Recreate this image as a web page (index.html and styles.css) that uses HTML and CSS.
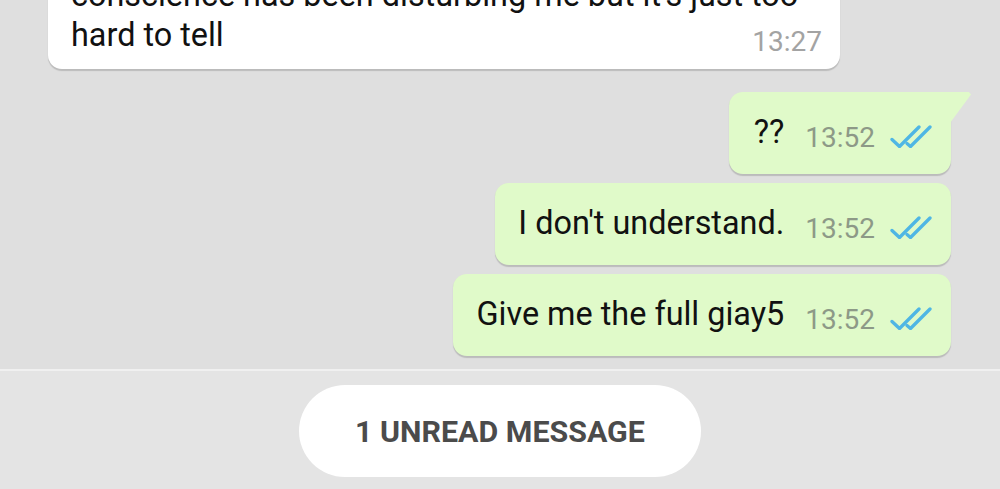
FILE: index.html
```html
<!DOCTYPE html>
<html>
<head>
<meta charset="utf-8">
<link rel="stylesheet" href="styles.css">
</head>
<body>
<div class="screen">
  <div class="chat">
    <div class="bubble in">
      <span class="text">conscience has been disturbing me but it's just too hard to tell</span><span class="meta in-meta"><span class="time">13:27</span></span>
    </div>
    <div class="row out-row">
      <div class="bubble out first">
        <span class="text">??</span>
        <span class="meta"><span class="time">13:52</span><svg class="ticks" viewBox="0 0 44 24" width="44" height="24"><path d="M4 15.5 L11.5 22.5 L31 3" /><path d="M19 19.5 L22.5 22.5 L42 3" /></svg></span>
        <span class="tail"></span>
      </div>
    </div>
    <div class="row out-row">
      <div class="bubble out">
        <span class="text">I don't understand.</span>
        <span class="meta"><span class="time">13:52</span><svg class="ticks" viewBox="0 0 44 24" width="44" height="24"><path d="M4 15.5 L11.5 22.5 L31 3" /><path d="M19 19.5 L22.5 22.5 L42 3" /></svg></span>
      </div>
    </div>
    <div class="row out-row">
      <div class="bubble out">
        <span class="text">Give me the full giay5</span>
        <span class="meta"><span class="time">13:52</span><svg class="ticks" viewBox="0 0 44 24" width="44" height="24"><path d="M4 15.5 L11.5 22.5 L31 3" /><path d="M19 19.5 L22.5 22.5 L42 3" /></svg></span>
      </div>
    </div>
  </div>
  <div class="divider"></div>
  <div class="bottom">
    <div class="unread">1 UNREAD MESSAGE</div>
  </div>
</div>
</body>
</html>
```
FILE: styles.css
```css
html, body {
  margin: 0;
  padding: 0;
}
body {
  width: 1000px;
  height: 489px;
  overflow: hidden;
  background: #e3e3e3;
  font-family: Roboto, "Noto Sans", "Liberation Sans", sans-serif;
  color: #111;
}
.screen {
  display: flex;
  flex-direction: column;
  height: 489px;
}
.chat {
  height: 369px;
  background: #dfdfdf;
  display: flex;
  flex-direction: column;
  justify-content: flex-end;
  overflow: hidden;
  padding: 0 49px 13px 48px;
  box-sizing: border-box;
  flex: none;
}
.bubble {
  border-radius: 14px;
  box-shadow: 0 1.5px 1px rgba(0, 0, 0, 0.16);
  font-size: 32.4px;
  line-height: 40px;
}
.bubble.in {
  background: #fff;
  display: flow-root;
  width: 792px;
  box-sizing: border-box;
  padding: 0 18px 12px 23px;
  margin-bottom: 23px;
  flex: none;
}
.in-meta {
  float: right;
  margin-top: 12px;
  margin-left: 18px;
}
.meta {
  font-size: 28px;
  line-height: 30px;
  display: flex;
  align-items: center;
  flex: none;
}
.time {
  color: #8d9987;
}
.in-meta .time {
  color: #a3a3a3;
}
.row {
  display: flex;
  justify-content: flex-end;
  flex: none;
}
.out-row + .out-row {
  margin-top: 9px;
}
.bubble.out {
  position: relative;
  background: #e0fac9;
  display: flex;
  align-items: flex-end;
  padding: 20px 19px 22px 23px;
  height: 82px;
  box-sizing: border-box;
}
.bubble.out.first {
  border-top-right-radius: 0;
  padding-left: 25px;
}
.bubble.out .text {
  white-space: nowrap;
}
.bubble.out .meta {
  margin-left: 21px;
  margin-bottom: -1px;
}
.ticks {
  margin-left: 13px;
  margin-top: -4px;
  fill: none;
  stroke: #4fb6e4;
  stroke-width: 3.3;
  stroke-linecap: round;
  stroke-linejoin: round;
}
.tail {
  position: absolute;
  top: 0;
  right: -20px;
  width: 21px;
  height: 31px;
  background: #e0fac9;
  clip-path: polygon(0 0, 90% 0, 100% 8%, 0 100%);
}
.divider {
  height: 2px;
  background: #f0f0f0;
  flex: none;
}
.bottom {
  flex: 1;
  background: #e4e4e4;
  display: flex;
  justify-content: center;
  padding-top: 14px;
}
.unread {
  width: 402px;
  height: 92px;
  box-sizing: border-box;
  border-radius: 46px;
  background: #fff;
  display: flex;
  align-items: center;
  justify-content: center;
  font-size: 30.4px;
  font-weight: bold;
  color: #4b4b4b;
}
```
